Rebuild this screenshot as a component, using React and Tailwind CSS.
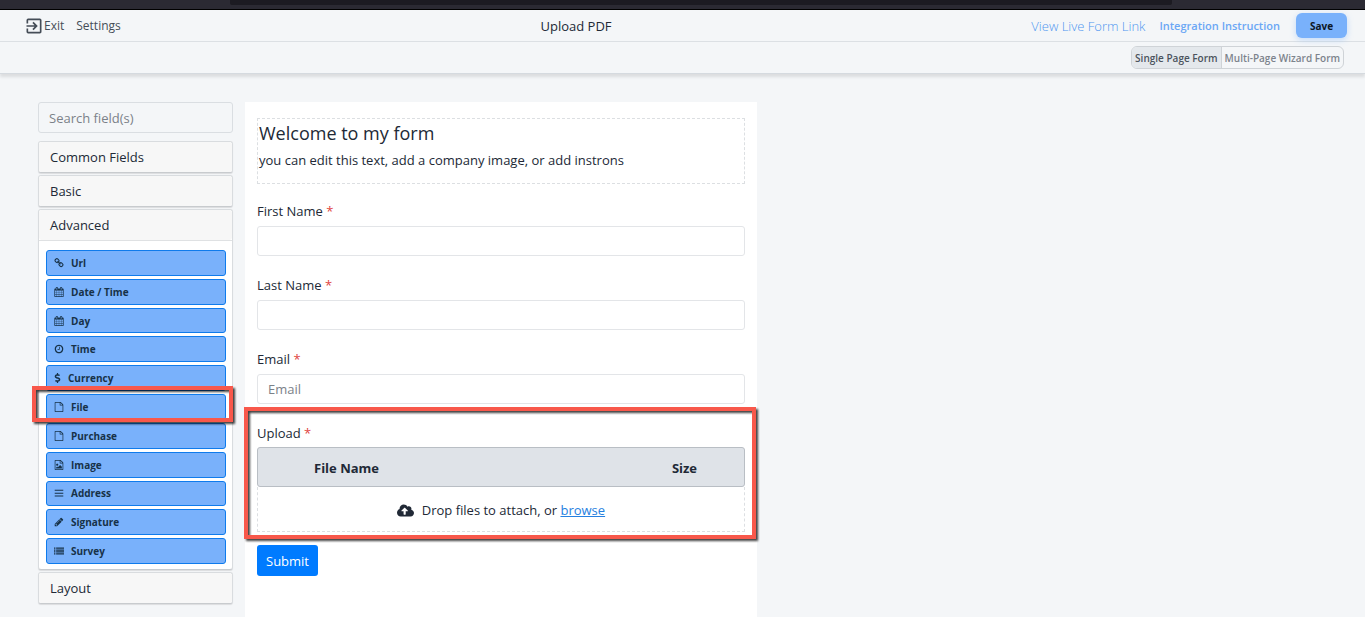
import React from "react";
import { FaDollarSign, FaCloudUploadAlt } from "react-icons/fa";
import { MdExitToApp } from "react-icons/md";

const PAGE =
  "M1596 380q28 28 48 76t20 88v1152q0 40-28 68t-68 28h-1344q-40 0-68-28t-28-68v-1600q0-40 28-68t68-28h896q40 0 88 20t76 48zm-444-244v376h376q-10-29-22-41l-313-313q-12-12-41-22zm384 1528v-1024h-416q-40 0-68-28t-28-68v-416h-768v1536h1280z";

const PATHS = {
  link: "M1520 1216q0-40-28-68l-208-208q-28-28-68-28-42 0-72 32 3 3 19 18.5t21.5 21.5 15 19 13 25.5 3.5 27.5q0 40-28 68t-68 28q-15 0-27.5-3.5t-25.5-13-19-15-21.5-21.5-18.5-19q-33 31-33 73 0 40 28 68l206 207q27 27 68 27 40 0 68-26l147-146q28-28 28-67zm-703-705q0-40-28-68l-206-207q-28-28-68-28-39 0-68 27l-147 146q-28 28-28 67 0 40 28 68l208 208q27 27 68 27 42 0 72-31-3-3-19-18.5t-21.5-21.5-15-19-13-25.5-3.5-27.5q0-40 28-68t68-28q15 0 27.5 3.5t25.5 13 19 15 21.5 21.5 18.5 19q33-31 33-73zm895 705q0 120-85 203l-147 146q-83 83-203 83-121 0-204-85l-206-207q-83-83-83-203 0-123 88-209l-88-88q-86 88-208 88-120 0-204-84l-208-208q-84-84-84-204t85-203l147-146q83-83 203-83 121 0 204 85l206 207q83 83 83 203 0 123-88 209l88 88q86-88 208-88 120 0 204 84l208 208q84 84 84 204z",
  calendar:
    "M192 1664h288v-288h-288v288zm352 0h320v-288h-320v288zm-352-352h288v-320h-288v320zm352 0h320v-320h-320v320zm-352-384h288v-288h-288v288zm736 736h320v-288h-320v288zm-384-736h320v-288h-320v288zm768 736h288v-288h-288v288zm-384-352h320v-320h-320v320zm-352-864v-288q0-13-9.5-22.5t-22.5-9.5h-64q-13 0-22.5 9.5t-9.5 22.5v288q0 13 9.5 22.5t22.5 9.5h64q13 0 22.5-9.5t9.5-22.5zm736 864h288v-320h-288v320zm-384-384h320v-288h-320v288zm384 0h288v-288h-288v288zm32-480v-288q0-13-9.5-22.5t-22.5-9.5h-64q-13 0-22.5 9.5t-9.5 22.5v288q0 13 9.5 22.5t22.5 9.5h64q13 0 22.5-9.5t9.5-22.5zm384-64v1280q0 52-38 90t-90 38h-1408q-52 0-90-38t-38-90v-1280q0-52 38-90t90-38h128v-96q0-66 47-113t113-47h64q66 0 113 47t47 113v96h384v-96q0-66 47-113t113-47h64q66 0 113 47t47 113v96h128q52 0 90 38t38 90z",
  clock:
    "M1024 544v448q0 14-9 23t-23 9h-320q-14 0-23-9t-9-23v-64q0-14 9-23t23-9h224v-352q0-14 9-23t23-9h64q14 0 23 9t9 23zm416 352q0-148-73-273t-198-198-273-73-273 73-198 198-73 273 73 273 198 198 273 73 273-73 198-198 73-273zm224 0q0 209-103 385.5t-279.5 279.5-385.5 103-385.5-103-279.5-279.5-103-385.5 103-385.5 279.5-279.5 385.5-103 385.5 103 279.5 279.5 103 385.5z",
  file: PAGE,
  image:
    PAGE +
    "M1408 1216v320h-1024v-192l192-192 128 128 384-384zM576 1024q-80 0-136-56t-56-136 56-136 136-56 136 56 56 136-56 136-136 56z",
  bars: "M128 320h1536v192H128zM128 832h1536v192H128zM128 1344h1536v192H128z",
  pencil:
    "M491 1536l91-91-235-235-91 91v107h128v128h107zm523-928q0-22-22-22-10 0-17 7l-542 542q-7 7-7 17 0 22 22 22 10 0 17-7l542-542q7-7 7-17zm-54-192l416 416-832 832h-416v-416zm683 96q0 53-37 90l-166 166-416-416 166-165q36-38 90-38 53 0 91 38l235 234q37 39 37 91z",
  list: "M0 256h256v224H0zM384 256h1408v224H384zM0 608h256v224H0zM384 608h1408v224H384zM0 960h256v224H0zM384 960h1408v224H384zM0 1312h256v224H0zM384 1312h1408v224H384z",
};

const FIELDS = [
  { name: "Url", icon: "link" },
  { name: "Date / Time", icon: "calendar" },
  { name: "Day", icon: "calendar" },
  { name: "Time", icon: "clock" },
  { name: "Currency", icon: "dollar" },
  { name: "File", icon: "file", marked: true },
  { name: "Purchase", icon: "file" },
  { name: "Image", icon: "image" },
  { name: "Address", icon: "bars" },
  { name: "Signature", icon: "pencil" },
  { name: "Survey", icon: "list" },
];

function FieldIcon({ name }) {
  if (name === "dollar") return <FaDollarSign className="h-[10px] w-[7px]" />;
  return (
    <svg viewBox="0 0 1792 1792" fill="currentColor" className="h-[10px] w-[10px]" aria-hidden="true">
      <path d={PATHS[name]} />
    </svg>
  );
}

function Marker({ className }) {
  return (
    <span
      className={
        "pointer-events-none absolute z-10 border-4 border-[#f8584b] [filter:drop-shadow(2px_2px_1px_rgba(0,0,0,0.75))] " +
        className
      }
    />
  );
}

function Section({ title, children }) {
  return (
    <section className="rounded-[3px] border border-[#d9dcdf] border-b-[#c8cbce] bg-white shadow-[0_1px_1px_rgba(0,0,0,0.1)]">
      <h2>
        <button type="button" className="block h-[30px] w-full rounded-[3px] bg-[#f7f7f7] px-[11px] text-left text-[13px] leading-5">
          {title}
        </button>
      </h2>
      {children}
    </section>
  );
}

function TextField({ id, label, placeholder }) {
  return (
    <div className="mb-[19px]">
      <label htmlFor={id} className="mb-[5px] block">
        {label} <span className="text-[#e0443e]">*</span>
      </label>
      <input
        id={id}
        type="text"
        placeholder={placeholder}
        className="block h-[30px] w-full rounded-[3px] border border-[#e3e5e8] bg-white px-[10px] placeholder:text-[#7b8188]"
      />
    </div>
  );
}

export default function App() {
  return (
    <div className="flex min-h-screen flex-col bg-[#f4f6f8] font-['Open_Sans','Noto_Sans',sans-serif] text-[13px] leading-5 text-[#212936]">
      <div className="flex h-[10px] border-b border-black bg-[#2b2a33]">
        <div className="ml-[230px] mr-[193px] h-[5px] flex-1 rounded-b-[2px] bg-[#1c1b22]" />
      </div>

      <header className="relative shadow-[0_3px_3px_rgba(0,0,0,0.1)]">
        <div className="flex h-8 items-center justify-between border-b border-[#dce0e4] pl-6 pr-[18px]">
          <nav className="flex items-center gap-3 text-[12px] text-[#454d57]">
            <a href="#exit" className="flex items-center">
              <MdExitToApp className="h-5 w-5" />
              Exit
            </a>
            <a href="#settings">Settings</a>
          </nav>
          <h1>Upload PDF</h1>
          <div className="flex items-center justify-end text-[#7ab0f5]">
            <a href="#live" className="mr-[14px] text-[13px] font-light text-[#4f96f0]">View Live Form Link</a>
            <a href="#integration" className="mr-4 text-[11px] font-semibold text-[#6ba7f5]">Integration Instruction</a>
            <button
              type="button"
              className="h-[25px] w-[51px] rounded-[6px] bg-[#79b1fb] text-[10px] font-bold text-[#0d1725] shadow-[0_2px_6px_rgba(121,177,251,0.4)]"
            >
              Save
            </button>
          </div>
        </div>
        <div className="flex h-8 items-center justify-end border-b border-[#d5dadf] pr-[21px]">
          <div className="flex h-[23px] overflow-hidden rounded-[6px] border border-[#cfd3d7] text-[10px] font-semibold">
            <button type="button" className="border-r border-[#cfd3d7] bg-[#e4e8ec] px-[3px] text-[#4b535c]">
              Single Page Form
            </button>
            <button type="button" className="px-[3px] text-[#7c838c]">
              Multi-Page Wizard Form
            </button>
          </div>
        </div>
      </header>

      <div className="flex flex-1 items-stretch gap-3 pt-7">
        <aside className="ml-[38px] w-[195px] shrink-0">
          <input
            type="text"
            aria-label="Search fields"
            placeholder="Search field(s)"
            className="mb-2 block h-[31px] w-full rounded-[3px] border border-[#dadee2] bg-transparent px-[10px] placeholder:text-[#7b8188]"
          />
          <div className="flex flex-col gap-[2px] pb-3">
            <Section title="Common Fields" />
            <Section title="Basic" />
            <Section title="Advanced">
              <ul className="grid h-[329px] auto-rows-fr gap-[3px] border-t border-[#dfe1e3] pb-[5px] pl-[7px] pr-[6px] pt-[9px]">
                {FIELDS.map((f) => (
                  <li key={f.name} className="relative">
                    <button
                      type="button"
                      className="flex h-full w-full items-center gap-[7px] rounded-[3px] border border-[#0f7bec] bg-[#79b1fb] px-[7px] text-[10px] font-bold leading-4 text-[#173248]"
                    >
                      <FieldIcon name={f.icon} />
                      {f.name}
                    </button>
                    {f.marked && <Marker className="-bottom-[2px] -left-[14px] -right-[7px] -top-2" />}
                  </li>
                ))}
              </ul>
            </Section>
            <Section title="Layout" />
          </div>
        </aside>

        <main className="w-[37.5%] bg-white px-3 pt-4">
          <div className="mb-[17px] h-[66px] border border-dashed border-[#dcdfe2] px-px pt-[2px]">
            <h2 className="mb-[5px] text-[18px] leading-6">Welcome to my form</h2>
            <p>you can edit this text, add a company image, or add instrons</p>
          </div>
          <form>
            <TextField id="first" label="First Name" />
            <TextField id="last" label="Last Name" />
            <TextField id="email" label="Email" placeholder="Email" />
            <div className="relative mb-[13px]">
              <p className="mb-1">
                Upload <span className="text-[#e0443e]">*</span>
              </p>
              <div className="rounded-[3px] border border-[#b9bec4] bg-[#dfe3e8]">
                <table className="w-full table-fixed">
                  <thead>
                    <tr className="h-[38px] text-left">
                      <th className="w-[56px]" />
                      <th className="pt-[2px] font-bold">File Name</th>
                      <th className="w-[72px] pt-[2px] font-bold">Size</th>
                    </tr>
                  </thead>
                </table>
              </div>
              <div className="flex h-[45px] items-center justify-center border border-t-0 border-dashed border-[#dcdfe2] pt-[2px]">
                <FaCloudUploadAlt className="mr-2 h-[17px] w-[17px]" />
                Drop files to attach, or&nbsp;
                <a href="#browse" className="text-[#2680e0] underline">browse</a>
              </div>
              <Marker className="-bottom-[7px] -left-[13px] -right-[11px] -top-4" />
            </div>
            <button type="submit" className="h-[31px] rounded-[3px] bg-[#007bff] px-[9px] text-white">
              Submit
            </button>
          </form>
        </main>
      </div>
    </div>
  );
}
